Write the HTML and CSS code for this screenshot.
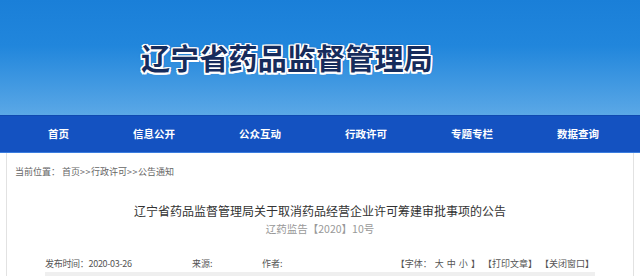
FILE: index.html
```html
<!DOCTYPE html>
<html lang="zh-CN">
<head>
  <meta charset="UTF-8">
  <meta name="viewport" content="width=device-width, initial-scale=1.0">
  <title>辽宁省药品监督管理局</title>
  <link rel="stylesheet" href="styles.css">
</head>
<body>

  <!-- 顶部横幅 -->
  <div class="banner">
    <h1 class="site-name">辽宁省药品监督管理局</h1>
  </div>

  <!-- 导航 -->
  <div class="nav">
    <a href="#">首页</a>
    <a href="#">信息公开</a>
    <a href="#">公众互动</a>
    <a href="#">行政许可</a>
    <a href="#">专题专栏</a>
    <a href="#">数据查询</a>
  </div>

  <!-- 正文 -->
  <div class="main">
    <div class="crumb">
      当前位置： <a href="#">首页</a><span class="sep">&gt;&gt;</span><a href="#">行政许可</a><span class="sep">&gt;&gt;</span><a href="#">公告通知</a>
    </div>

    <div class="article">
      <h2 class="article-title">辽宁省药品监督管理局关于取消药品经营企业许可筹建审批事项的公告</h2>
      <p class="doc-no">辽药监告【2020】10号</p>

      <div class="meta">
        <span class="date">发布时间：2020-03-26</span>
        <span class="source">来源:</span>
        <span class="author">作者:</span>
        <span class="tools">【字体：&nbsp;<a href="#">大</a> <a href="#">中</a> <a href="#">小</a> 】 【<a href="#">打印文章</a>】 【<a href="#">关闭窗口</a>】</span>
      </div>
    </div>
  </div>

</body>
</html>
```

FILE: styles.css
```css
* {
  margin: 0;
  padding: 0;
  box-sizing: border-box;
}

html, body {
  width: 100%;
  height: 100%;
  overflow: hidden;
  background: #fff;
  font-family: "Noto Sans CJK SC", "Microsoft YaHei", sans-serif;
}

a {
  color: inherit;
  text-decoration: none;
}

/* 横幅 */
.banner {
  height: 115px;
  background: linear-gradient(to bottom, #1a7fd8 0%, #2186dc 40%, #5ba8e6 100%);
  padding-top: 43px;
  padding-left: 141px;
}

.site-name {
  font-size: 29px;
  line-height: 29px;
  font-weight: bold;
  color: #162c5c;
  letter-spacing: 0.2px;
  text-shadow:
    1.5px 0 0 #fff, -1.5px 0 0 #fff, 0 1.5px 0 #fff, 0 -1.5px 0 #fff,
    1.5px 1.5px 0 #fff, -1.5px -1.5px 0 #fff, 1.5px -1.5px 0 #fff, -1.5px 1.5px 0 #fff,
    0 0 3px rgba(10, 40, 90, 0.6);
}

/* 导航 */
.nav {
  height: 38px;
  background: #1452c1;
  border-top: 1px solid #1049b0;
  border-bottom: 1px solid #3b7ddf;
  display: flex;
  align-items: center;
  gap: 64px;
  padding-left: 48px;
}

.nav a {
  color: #fff;
  font-size: 10.5px;
  font-weight: bold;
  line-height: 36px;
}

/* 正文区 */
.main {
  margin: 0 6px 0 6px;
  height: 200px;
  border-left: 1px solid #e2e2e2;
  border-right: 1px solid #e2e2e2;
}

.crumb {
  padding: 12px 0 0 8px;
  font-size: 9px;
  line-height: 14px;
  color: #666;
}

.crumb .sep {
  letter-spacing: 0.5px;
}

.article {
  padding: 0 38px;
}

.article-title {
  margin-top: 24px;
  font-size: 12px;
  line-height: 16px;
  font-weight: normal;
  color: #333;
  text-align: center;
}

.doc-no {
  margin-top: 3px;
  font-size: 10.5px;
  line-height: 14px;
  color: #999;
  text-align: center;
}

.meta {
  margin-top: 21px;
  display: flex;
  font-size: 9px;
  line-height: 14px;
  color: #555;
  padding-bottom: 1px;
  border-bottom: 4px solid #efefef;
}

.meta .date {
  width: 147px;
  letter-spacing: -0.3px;
}

.meta .source {
  width: 70px;
}

.meta .tools {
  margin-left: auto;
  margin-right: 1px;
  word-spacing: 1px;
}
```
